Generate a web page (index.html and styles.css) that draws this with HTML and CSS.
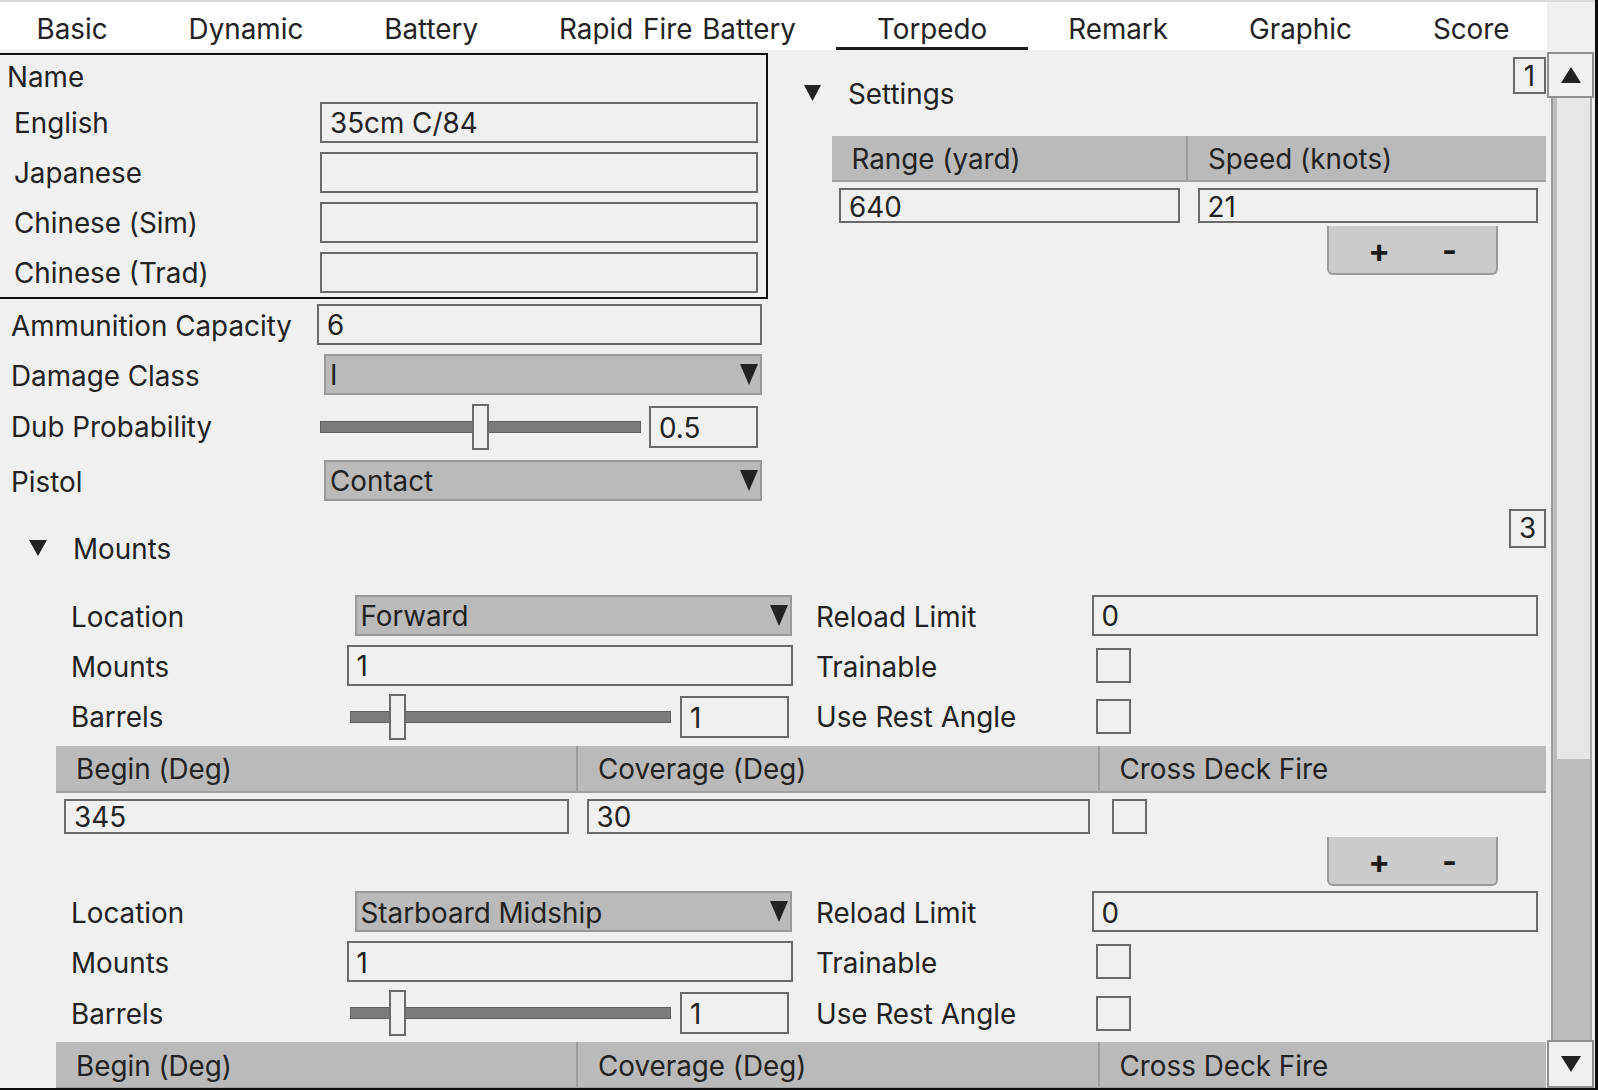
FILE: index.html
```html
<!DOCTYPE html>
<html>
<head>
<meta charset="utf-8">
<link rel="stylesheet" href="styles.css">
</head>
<body>
<div class="window">
  <div class="tabbar">
    <div class="tabs">
      <div class="tab">Basic</div>
      <div class="tab">Dynamic</div>
      <div class="tab">Battery</div>
      <div class="tab">Rapid Fire Battery</div>
      <div class="tab active">Torpedo</div>
      <div class="tab">Remark</div>
      <div class="tab">Graphic</div>
      <div class="tab">Score</div>
    </div>
  </div>
  <div class="main">
    <div class="scroll">
      <div class="top">
        <div class="leftcol">
          <div class="namebox">
            <div class="name-title">Name</div>
            <div class="nrow"><span class="nlabel">English</span><div class="input nin">35cm C/84</div></div>
            <div class="nrow"><span class="nlabel">Japanese</span><div class="input nin"></div></div>
            <div class="nrow"><span class="nlabel">Chinese (Sim)</span><div class="input nin"></div></div>
            <div class="nrow"><span class="nlabel">Chinese (Trad)</span><div class="input nin"></div></div>
          </div>
          <div class="frow"><span class="flabel">Ammunition Capacity</span><div class="input fin">6</div></div>
          <div class="frow"><span class="flabel">Damage Class</span><div class="dropdown fdd"><span>I</span><svg class="ddarrow" width="18" height="21" viewBox="0 0 18 21"><polygon points="0,0 18,0 9,21" fill="#222"/></svg></div></div>
          <div class="frow tall"><span class="flabel">Dub Probability</span>
            <div class="slider fslider"><div class="track"></div><div class="thumb" style="left:152px"></div></div>
            <div class="input fval">0.5</div>
          </div>
          <div class="frow"><span class="flabel">Pistol</span><div class="dropdown fdd"><span>Contact</span><svg class="ddarrow" width="18" height="21" viewBox="0 0 18 21"><polygon points="0,0 18,0 9,21" fill="#222"/></svg></div></div>
        </div>
        <div class="rightcol">
          <div class="fold-head settings-head">
            <div class="fold-toggle"><svg class="foldtri" width="17" height="16" viewBox="0 0 17 16"><polygon points="0,0 17,0 8.5,16" fill="#222"/></svg><span class="fold-title">Settings</span></div>
            <div class="badge badge1">1</div>
          </div>
          <div class="stable">
            <div class="thead">
              <div class="th s1">Range (yard)</div>
              <div class="th s2">Speed (knots)</div>
            </div>
            <div class="trow">
              <div class="input sin1">640</div>
              <div class="input sin2">21</div>
            </div>
            <div class="pm"><span>+</span><span>-</span></div>
          </div>
        </div>
      </div>

      <div class="fold-head mounts-head">
        <div class="fold-toggle"><svg class="foldtri" width="18" height="16" viewBox="0 0 18 16"><polygon points="0,0 18,0 9,16" fill="#222"/></svg><span class="fold-title">Mounts</span></div>
        <div class="badge badge3">3</div>
      </div>

      <div class="mount">
        <div class="mgrid">
          <div class="mrow"><span class="mlabel">Location</span><div class="dropdown mdd"><span>Forward</span><svg class="ddarrow" width="18" height="21" viewBox="0 0 18 21"><polygon points="0,0 18,0 9,21" fill="#222"/></svg></div></div>
          <div class="mrow"><span class="mlabel">Reload Limit</span><div class="input min">0</div></div>
          <div class="mrow"><span class="mlabel">Mounts</span><div class="input min">1</div></div>
          <div class="mrow"><span class="mlabel">Trainable</span><div class="check mcheck"></div></div>
          <div class="mrow tall"><span class="mlabel">Barrels</span>
            <div class="slider mslider"><div class="track"></div><div class="thumb" style="left:39px"></div></div>
            <div class="input mval">1</div>
          </div>
          <div class="mrow tall"><span class="mlabel">Use Rest Angle</span><div class="check mcheck"></div></div>
        </div>
        <div class="mtable">
          <div class="thead">
            <div class="th m1">Begin (Deg)</div>
            <div class="th m2">Coverage (Deg)</div>
            <div class="th m3">Cross Deck Fire</div>
          </div>
          <div class="trow">
            <div class="input min1">345</div>
            <div class="input min2">30</div>
            <div class="check tcheck"></div>
          </div>
          <div class="pm"><span>+</span><span>-</span></div>
        </div>
      </div>

      <div class="mount">
        <div class="mgrid">
          <div class="mrow"><span class="mlabel">Location</span><div class="dropdown mdd"><span>Starboard Midship</span><svg class="ddarrow" width="18" height="21" viewBox="0 0 18 21"><polygon points="0,0 18,0 9,21" fill="#222"/></svg></div></div>
          <div class="mrow"><span class="mlabel">Reload Limit</span><div class="input min">0</div></div>
          <div class="mrow"><span class="mlabel">Mounts</span><div class="input min">1</div></div>
          <div class="mrow"><span class="mlabel">Trainable</span><div class="check mcheck"></div></div>
          <div class="mrow tall"><span class="mlabel">Barrels</span>
            <div class="slider mslider"><div class="track"></div><div class="thumb" style="left:39px"></div></div>
            <div class="input mval">1</div>
          </div>
          <div class="mrow tall"><span class="mlabel">Use Rest Angle</span><div class="check mcheck"></div></div>
        </div>
        <div class="mtable">
          <div class="thead">
            <div class="th m1">Begin (Deg)</div>
            <div class="th m2">Coverage (Deg)</div>
            <div class="th m3">Cross Deck Fire</div>
          </div>
        </div>
      </div>
    </div>
    <div class="scrollbar">
      <div class="sbtn up"><svg width="20" height="16" viewBox="0 0 20 16"><polygon points="10,0 20,16 0,16" fill="#222"/></svg></div>
      <div class="strack"><div class="sthumb"></div></div>
      <div class="sbtn down"><svg width="20" height="16" viewBox="0 0 20 16"><polygon points="0,0 20,0 10,16" fill="#222"/></svg></div>
    </div>
  </div>
</div>
</body>
</html>
```

FILE: styles.css
```css
* { box-sizing: border-box; }
html, body { margin: 0; padding: 0; }
body {
  width: 1598px;
  height: 1090px;
  overflow: hidden;
  background: #f0f0f0;
  font-family: Inter, "Noto Sans", "Liberation Sans", sans-serif;
  font-size: 27.8px;
  color: #222222;
}
.window {
  width: 1598px;
  height: 1090px;
  border-right: 3px solid #0e0e0e;
  border-bottom: 2px solid #0e0e0e;
  display: flex;
  flex-direction: column;
  overflow: hidden;
}

/* tabs */
.tabbar {
  height: 50px;
  flex: none;
  border-top: 2px solid #d9d9d9;
  display: flex;
}
.tabs {
  display: flex;
  background: #ffffff;
  width: 1551px;
  margin-left: -4px;
  height: 48px;
}
.tab {
  padding: 5px 40.5px 0;
  height: 48px;
  display: flex;
  align-items: center;
  white-space: nowrap;
  word-spacing: 2px;
}
.tab.active { box-shadow: inset 0 -3px 0 #1a1a1a; }

/* main area */
.main { flex: 1; display: flex; min-height: 0; }
.scroll { width: 1547px; flex: none; overflow: hidden; }

.scrollbar { width: 48px; flex: none; display: flex; flex-direction: column; }
.sbtn {
  width: 47px;
  height: 46px;
  flex: none;
  border: 2px solid #8f8f8f;
  background: #f0f0f0;
  display: flex;
  align-items: center;
  justify-content: center;
}
.sbtn.up { margin-top: 2px; }
.sbtn.down { height: 48px; }
.strack {
  flex: 1;
  margin: 0 3px 0 4px;
  background: #bcbcbc;
  border-left: 2px solid #9a9a9a;
  border-right: 2px solid #a8a8a8;
}
.sthumb { height: 661px; margin-left: 4px; background: #e6e6e6; }

/* generic controls */
.input {
  height: 41px;
  border: 2px solid #6a6a6a;
  padding-left: 8px;
  padding-top: 2px;
  display: flex;
  align-items: center;
  white-space: nowrap;
}
.dropdown {
  height: 41px;
  border: 2px solid #999999;
  background: #bababa;
  padding-left: 4px;
  padding-right: 2px;
  padding-top: 2px;
  display: flex;
  align-items: center;
  justify-content: space-between;
  white-space: nowrap;
}
.dropdown svg { margin-top: -2px; }
.check { width: 35px; height: 35px; border: 2px solid #6a6a6a; flex: none; }
.slider { position: relative; height: 46px; flex: none; display: flex; align-items: center; }
.slider .track { width: 100%; height: 12px; background: #7b7b7b; border: 1px solid #616161; }
.slider .thumb {
  position: absolute;
  top: 0;
  width: 17px;
  height: 46px;
  background: #f0f0f0;
  border: 2px solid #6a6a6a;
}

/* top section */
.top { display: flex; }
.leftcol { width: 768px; flex: none; }
.namebox {
  margin-top: 3px;
  width: 768px;
  border: 2px solid #111111;
  border-left: none;
}
.name-title { height: 42px; padding-left: 7px; padding-top: 2px; display: flex; align-items: center; }
.nrow { height: 50px; display: flex; align-items: center; }
.nlabel { width: 320px; padding-left: 14px; padding-top: 2px; flex: none; }
.nin { width: 438px; }

.frow { height: 50px; display: flex; align-items: center; }
.frow.tall { height: 56px; }
.flabel { width: 317px; padding-left: 11px; padding-top: 3px; flex: none; white-space: nowrap; }
.frow.tall .flabel { padding-top: 0; }
.fin { width: 445px; }
.fdd { width: 438px; margin-left: 7px; }
.fslider { width: 321px; margin-left: 3px; }
.fval { width: 109px; margin-left: 8px; height: 42px; }

.rightcol { margin-left: 32px; flex: 1; margin-top: 3px; }
.fold-head { display: flex; justify-content: space-between; }
.settings-head { height: 80px; padding-left: 4px; }
.fold-toggle { display: flex; align-items: center; }
.fold-title { margin-left: 27px; padding-top: 2px; }
.badge {
  border: 2px solid #6a6a6a;
  display: flex;
  align-items: center;
  justify-content: center;
}
.badge1 { width: 33px; height: 37px; margin-top: 4px; margin-right: 1px; }

.stable { margin-left: 31.5px; margin-right: 1px; margin-top: 3px; }
.thead {
  height: 46px;
  display: flex;
  background: #bababa;
  border-bottom: 2px solid #a0a0a0;
}
.th { display: flex; align-items: center; padding-left: 20px; padding-top: 2px; white-space: nowrap; }
.s1 { width: 356.5px; border-right: 2px solid #9c9c9c; }
.s2 { flex: 1; padding-left: 20px; }
.trow { display: flex; align-items: center; }
.stable .trow { margin-top: 6px; }
.sin1 { height: 35px; width: 341px; margin-left: 7.5px; }
.sin2 { height: 35px; width: 340.5px; margin-left: 17.5px; }
.pm {
  margin-left: auto;
  margin-right: 48px;
  margin-top: 3px;
  width: 171px;
  height: 49px;
  background: #cbcbcb;
  border: 2px solid #9a9a9a;
  border-top: none;
  border-radius: 0 0 6px 6px;
  display: flex;
  align-items: center;
  justify-content: center;
  gap: 52px;
  padding-top: 2px;
  font-weight: 700;
  font-size: 32px;
  color: #1a1a1a;
}

/* mounts */
.mounts-head { height: 84px; padding-left: 28.5px; margin-top: 1px; }
.mounts-head .fold-title { margin-left: 26.5px; }
.badge3 { width: 37px; height: 39.5px; margin-top: 2.5px; margin-right: 1px; }

.mount { margin-left: 56px; width: 1490px; margin-bottom: 1px; }
.mgrid { display: grid; grid-template-columns: 745px 745px; }
.mrow { height: 50px; display: flex; align-items: center; }
.mrow.tall { height: 53.5px; }
.mlabel { width: 290.5px; padding-left: 15px; padding-top: 3px; flex: none; white-space: nowrap; }
.mrow.tall .mlabel { padding-top: 1px; }
.min { width: 446px; }
.mdd { width: 437.5px; margin-left: 8px; }
.mcheck { margin-left: 4px; }
.mslider { width: 321px; margin-left: 3px; }
.mval { width: 109px; margin-left: 9.5px; height: 42px; }

.mtable { margin-top: 2px; }
.mtable .thead { height: 47px; }
.m1 { width: 522px; border-right: 2px solid #9c9c9c; }
.m2 { width: 521.5px; border-right: 2px solid #9c9c9c; }
.m3 { flex: 1; }
.mtable .trow { margin-top: 6px; }
.min1 { height: 35px; width: 504.5px; margin-left: 8px; }
.min2 { height: 35px; width: 503.5px; margin-left: 18px; }
.tcheck { margin-left: 21.5px; }
```
